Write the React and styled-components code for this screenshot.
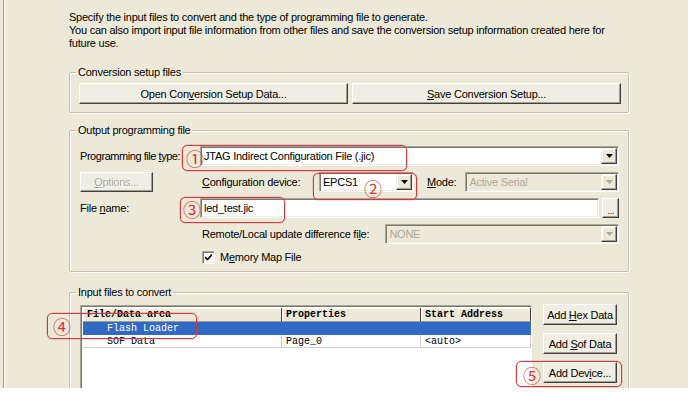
import React from 'react'
import styled, { createGlobalStyle } from 'styled-components'

const GlobalStyle = createGlobalStyle`
  html, body { margin: 0; padding: 0; background: #fff; }
  body {
    font-family: "Liberation Sans", Arial, sans-serif;
    font-size: 11px;
    letter-spacing: -0.24px;
    color: #000;
  }
`

const Window = styled.div`
  position: relative;
  width: 688px;
  height: 388px;
  box-sizing: border-box;
  padding-left: 3px;
  background: #ece9d8;
  overflow: hidden;
`

const Frame = styled.div`
  height: 100%;
  box-sizing: border-box;
  border-left: 1px solid #9c9a8c;
  box-shadow: inset 1px 0 0 #fff;
  padding: 11px 0 0 65px;
`

const Intro = styled.p`
  margin: 0;
  line-height: 13px;
`

const GroupBox = styled.fieldset`
  margin: ${p => p.$top}px 0 0 0;
  width: 560px;
  box-sizing: border-box;
  border: 1px solid #c2bfae;
  border-radius: 2px;
  box-shadow: inset 1px 1px 0 #fff, 1px 1px 0 #fff;
  padding: ${p => p.$pt}px ${p => p.$pr}px ${p => p.$pb}px ${p => p.$pl}px;
  min-width: 0;
`

const Legend = styled.legend`
  padding: 0 2px;
  margin-left: ${p => p.$shift}px;
  line-height: 13px;
  color: #000;
`

const ButtonPair = styled.div`
  display: grid;
  grid-template-columns: 1fr 1fr;
  gap: 4px;
`

const Button = styled.button`
  box-sizing: border-box;
  height: ${p => p.$h || 21}px;
  width: ${p => (p.$w ? `${p.$w}px` : 'auto')};
  padding: 0;
  font: inherit;
  letter-spacing: inherit;
  color: ${p => (p.disabled ? '#aca899' : '#000')};
  text-shadow: ${p => (p.disabled ? '1px 1px 0 #fff' : 'none')};
  background: #f0eee3;
  border: 1px solid;
  border-color: #fff #404040 #404040 #fff;
  box-shadow: inset -1px -1px 0 #a09e90;
  cursor: default;
`

const OutputGrid = styled.div`
  display: grid;
  grid-template-columns: 120px 1fr;
  grid-template-rows: repeat(4, 20px) 14px;
  row-gap: 6px;
  align-items: center;
`

const Label = styled.span`
  padding-left: ${p => p.$indent || 0}px;
  width: ${p => (p.$w ? `${p.$w}px` : 'auto')};
  flex: ${p => (p.$grow ? 1 : 'none')};
  letter-spacing: ${p => (p.$tight ? '-0.45px' : 'inherit')};
  white-space: nowrap;
  line-height: 13px;
`

const Cell = styled.div`
  display: flex;
  align-items: center;
  height: 20px;
`

const Field = styled.div`
  box-sizing: border-box;
  display: flex;
  align-items: center;
  height: 20px;
  width: ${p => (p.$w ? `${p.$w}px` : 'auto')};
  flex: ${p => (p.$w ? 'none' : 1)};
  margin-left: ${p => p.$ml || 0}px;
  border: 1px solid;
  border-color: #a7a596 #fff #fff #a7a596;
  box-shadow: inset 1px 1px 0 #7a786c, inset -1px -1px 0 #f1efe2;
  background: ${p => (p.$disabled ? '#ece9d8' : '#fff')};
  color: ${p => (p.$disabled ? '#aca899' : '#000')};
  padding: 1px 1px 1px 3px;
`

const FieldText = styled.span`
  flex: 1;
  white-space: nowrap;
  overflow: hidden;
  line-height: 13px;
`

const DropButton = styled.span`
  box-sizing: border-box;
  width: 16px;
  height: 16px;
  display: flex;
  align-items: center;
  justify-content: center;
  background: #ece9d8;
  border: 1px solid;
  border-color: #f4f3ee #404040 #404040 #f4f3ee;
  box-shadow: inset -1px -1px 0 #a09e90, inset 1px 1px 0 #fff;
`

const Browse = styled(Button)`
  margin-left: 3px;
  width: 17px;
  height: 20px;
  font-size: 9px;
  line-height: 9px;
  padding-top: 6px;
`

const CheckRow = styled.label`
  display: flex;
  align-items: center;
  gap: 5px;
  height: 14px;
`

const CheckBox = styled.span`
  box-sizing: border-box;
  width: 13px;
  height: 13px;
  margin-left: 2px;
  background: #fff;
  border: 1px solid;
  border-color: #a7a596 #fff #fff #a7a596;
  box-shadow: inset 1px 1px 0 #7a786c, inset -1px -1px 0 #f1efe2;
  display: flex;
  align-items: center;
  justify-content: center;
`

const InputArea = styled.div`
  display: flex;
  gap: 11px;
`

const List = styled.div`
  box-sizing: border-box;
  width: 452px;
  height: 110px;
  background: #fff;
  border: 1px solid;
  border-color: #a7a596 #fff #fff #a7a596;
  box-shadow: inset 1px 1px 0 #7a786c;
  padding: 2px 0 0 2px;
  font-family: "Liberation Mono", "Courier New", monospace;
  font-size: 10px;
  letter-spacing: 0;
`

const ListRow = styled.div`
  display: grid;
  grid-template-columns: 199px 139px 110px;
  height: ${p => (p.$head ? 14 : 13)}px;
  line-height: ${p => (p.$head ? 14 : 13)}px;
  background: ${p => (p.$selected ? '#316ac5' : 'transparent')};
  color: ${p => (p.$selected ? '#fff' : '#000')};
  font-weight: ${p => (p.$head ? 'bold' : 'normal')};
`

const HeadCell = styled.span`
  box-sizing: border-box;
  background: #ece9d8;
  border-right: 1px solid #404040;
  border-bottom: 1px solid #a09e90;
  box-shadow: inset 1px 1px 0 #fff;
  padding-left: 4px;
  white-space: nowrap;
  overflow: hidden;
`

const DataCell = styled.span`
  box-sizing: border-box;
  border-right: 1px solid ${p => (p.$selected ? '#316ac5' : '#d4d0c8')};
  border-bottom: 1px solid ${p => (p.$selected ? '#316ac5' : '#d4d0c8')};
  padding-left: ${p => p.$indent || 4}px;
  white-space: nowrap;
  overflow: hidden;
`

const SideButtons = styled.div`
  display: flex;
  flex-direction: column;
  gap: 8px;
  margin-top: -1px;
`

const Note = styled.div`
  position: absolute;
  left: ${p => p.$x}px;
  top: ${p => p.$y}px;
  width: ${p => p.$w}px;
  height: ${p => p.$h}px;
  box-sizing: border-box;
  border: 1px solid #cf3a3e;
  border-radius: 5px;
  box-shadow: 0 0 0 0.5px rgba(207, 58, 62, 0.35);
  pointer-events: none;
`

const Badge = styled.span`
  position: absolute;
  left: ${p => p.$x}px;
  top: ${p => p.$y}px;
  font-family: "Noto Sans CJK SC", "DejaVu Sans", sans-serif;
  font-size: 18px;
  line-height: 18px;
  letter-spacing: 0;
  color: #d0383c;
`

const Arrow = ({ gray }) => (
  <svg width="7" height="4" viewBox="0 0 7 4">
    <polygon points="0,0 7,0 3.5,4" fill={gray ? '#aca899' : '#000'} />
  </svg>
)

const Combo = ({ text, w, ml, disabled }) => (
  <Field $w={w} $ml={ml} $disabled={disabled}>
    <FieldText>{text}</FieldText>
    <DropButton>
      <Arrow gray={disabled} />
    </DropButton>
  </Field>
)

const notes = [
  { n: '①', x: 182, y: 145, w: 225, h: 26, bx: 3, by: 3 },
  { n: '②', x: 313, y: 173, w: 104, h: 27, bx: 50, by: 5 },
  { n: '③', x: 180, y: 197, w: 105, h: 26, bx: 2, by: 2 },
  { n: '④', x: 47, y: 313, w: 150, h: 26, bx: 5, by: 3 },
  { n: '⑤', x: 516, y: 361, w: 106, h: 26, bx: 6, by: 4 },
]

const rows = [
  { file: 'Flash Loader', props: '', addr: '', selected: true },
  { file: 'SOF Data', props: 'Page_0', addr: '<auto>' },
]

export default function App() {
  return (
    <>
      <GlobalStyle />
      <Window>
        <Frame>
          <Intro>
            Specify the input files to convert and the type of programming file to generate.
            <br />
            You can also import input file information from other files and save the conversion setup information created here for
            <br />
            future use.
          </Intro>

          <GroupBox $top={16} $pt={4} $pr={7} $pb={8} $pl={9}>
            <Legend $shift={-3}>Conversion setup files</Legend>
            <ButtonPair>
              <Button>Open Con<u>v</u>ersion Setup Data...</Button>
              <Button><u>S</u>ave Conversion Setup...</Button>
            </ButtonPair>
          </GroupBox>

          <GroupBox $top={11} $pt={9} $pr={10} $pb={7} $pl={10}>
            <Legend $shift={-4}>Output programming file</Legend>
            <OutputGrid>
              <Label $tight>Programming file <u>t</u>ype:</Label>
              <Combo text="JTAG Indirect Configuration File (.jic)" />

              <Button disabled $w={73} $h={20}><u>O</u>ptions...</Button>
              <Cell>
                <Label $indent={2} $w={117}><u>C</u>onfiguration device:</Label>
                <Combo text="EPCS1" w={95} />
                <Label $indent={13}><u>M</u>ode:</Label>
                <Combo text="Active Serial" w={154} ml={9} disabled />
              </Cell>

              <Label>File <u>n</u>ame:</Label>
              <Cell>
                <Field>
                  <FieldText>led_test.jic</FieldText>
                </Field>
                <Browse>...</Browse>
              </Cell>

              <span />
              <Cell>
                <Label $indent={2} $grow>Remote/Local update difference fi<u>l</u>e:</Label>
                <Combo text="NONE" w={234} disabled />
              </Cell>

              <span />
              <CheckRow>
                <CheckBox>
                  <svg width="7" height="7" viewBox="0 0 7 7">
                    <path d="M0 3 L2.5 5.5 L7 0.5" stroke="#000" strokeWidth="1.6" fill="none" />
                  </svg>
                </CheckBox>
                <span>M<u>e</u>mory Map File</span>
              </CheckRow>
            </OutputGrid>
          </GroupBox>

          <GroupBox $top={14} $pt={6} $pr={10} $pb={0} $pl={10}>
            <Legend $shift={-4}>Input files to convert</Legend>
            <InputArea>
              <List>
                <ListRow $head>
                  <HeadCell>File/Data area</HeadCell>
                  <HeadCell>Properties</HeadCell>
                  <HeadCell>Start Address</HeadCell>
                </ListRow>
                {rows.map(r => (
                  <ListRow key={r.file} $selected={r.selected}>
                    <DataCell $selected={r.selected} $indent={24}>{r.file}</DataCell>
                    <DataCell $selected={r.selected}>{r.props}</DataCell>
                    <DataCell $selected={r.selected}>{r.addr}</DataCell>
                  </ListRow>
                ))}
              </List>
              <SideButtons>
                <Button $w={74}>Add <u>H</u>ex Data</Button>
                <Button $w={74}>Add <u>S</u>of Data</Button>
                <Button $w={74}>Add Dev<u>i</u>ce...</Button>
              </SideButtons>
            </InputArea>
          </GroupBox>
        </Frame>

        {notes.map(n => (
          <Note key={n.n} $x={n.x} $y={n.y} $w={n.w} $h={n.h}>
            <Badge $x={n.bx} $y={n.by}>{n.n}</Badge>
          </Note>
        ))}
      </Window>
    </>
  )
}
